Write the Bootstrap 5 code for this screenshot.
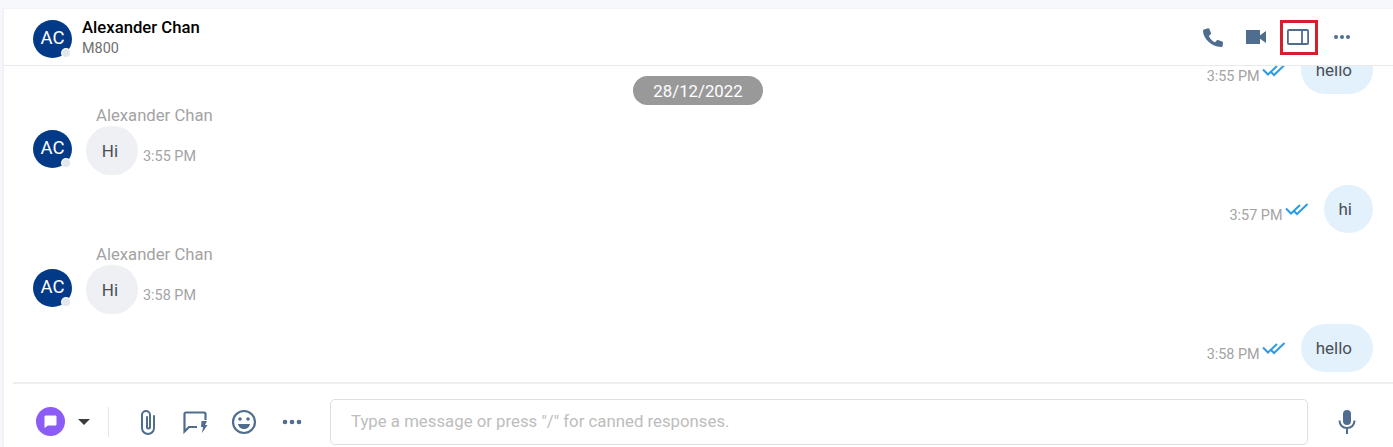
<!DOCTYPE html>
<html lang="en">
<head>
    <meta charset="UTF-8">
    <meta name="viewport" content="width=device-width, initial-scale=1.0">
    <title>Chat</title>
    <link href="https://cdn.jsdelivr.net/npm/bootstrap@5.3.0/dist/css/bootstrap.min.css" rel="stylesheet">
    <style>
        html, body { height: 447px; overflow: hidden; }
        body { background: #f7f8fc; font-family: Roboto, "Liberation Sans", sans-serif; padding: 9px 0 0 4px; }
        .chat-shell { background: #fff; height: 438px; box-shadow: -1px 0 3px rgba(0,0,0,.05); }
        .chat-head { height: 57px; padding: 0 32px 0 29px; border-bottom: 1px solid #e9e9ec; }
        .avatar-ac { width: 39px; height: 38px; background: #033a87; color: #fff; font-size: 18.5px; flex-shrink: 0; }
        .avatar-ac::after { content: ""; position: absolute; right: 2px; bottom: 1px; width: 8px; height: 8px; border-radius: 50%; background: #e3e6ea; box-shadow: 0 0 0 1px #fff; }
        .avatar-head { align-self: flex-start; margin-top: 11px; }
        .head-text { margin-left: 10px; padding-top: 3px; }
        .head-name { font-size: 16.7px; line-height: 20px; color: #000; font-weight: 500; }
        .head-sub { font-size: 14.4px; line-height: 21px; color: #6f6f6f; }
        .head-tools { gap: 5px; }
        .head-tool { width: 38px; height: 35px; display: flex; align-items: center; justify-content: center; }
        .head-tool.is-marked { outline: 3px solid #d2202c; outline-offset: -3px; }
        .msg-area { height: 316px; padding: 0 20px 10px 29px; justify-content: flex-end; overflow: hidden; flex-shrink: 0; }
        .date-pill { position: absolute; top: 10px; left: 629px; width: 130px; height: 29px; line-height: 30px; background: #999; color: #fff; font-size: 16.8px; border-radius: 15px; text-align: center; z-index: 1; }
        .sender-name { font-size: 16.7px; line-height: 20px; color: #a3a3a3; margin-left: 63px; padding-top: 1px; }
        .bubble-in, .bubble-out { display: flex; align-items: center; justify-content: center; font-size: 17px; line-height: 1; color: #4a4f55; flex-shrink: 0; padding-top: 1px; }
        .bubble-in { background: #eef0f3; width: 52px; height: 49px; border-radius: 25px; margin-left: 14px; padding-right: 4px; }
        .bubble-out { background: #e3f1fd; padding-left: 15px; padding-right: 21px; height: 48px; border-radius: 24px; margin-left: 15px; }
        .msg-time { font-size: 14.4px; color: #a3a3a3; line-height: 18px; }
        .time-out { margin-top: 14px; margin-right: 2px; }
        .time-in { margin-left: 5px; margin-top: 12px; }
        .avatar-in { margin-top: 4px; }
        .msg-in { margin-top: 11px; }
        .msg-out { margin-top: 10px; }
        .composer { flex: 1; margin-left: 9px; border-top: 2px solid #eeeeef; padding: 12px 36px 0 23px; }
        .type-dot { width: 29px; height: 29px; background: #8b5cf6; }
        .type-caret { width: 0; height: 0; border-left: 6px solid transparent; border-right: 6px solid transparent; border-top: 6px solid #3c3c3c; margin-left: 13px; margin-right: 18px; }
        .tool-sep { width: 1px; height: 30px; background: #e6e6e6; margin-right: 29px; }
        .tool-quick { margin-left: 24px; }
        .tool-smile { margin-left: 23px; }
        .tool-more { margin-left: 25px; }
        .composer-input { width: 978px; height: 46px; border: 1px solid #dcdfe3; border-radius: 5px; font-size: 16.8px; color: #bdbdbd; padding: 0 20px; line-height: 42px; margin-left: 28px; white-space: nowrap; }
    </style>
</head>
<body>
    <div class="chat-shell d-flex flex-column">
        <div class="chat-head d-flex align-items-center flex-shrink-0">
            <div class="avatar-ac avatar-head rounded-circle d-flex align-items-center justify-content-center position-relative">AC</div>
            <div class="head-text">
                <div class="head-name">Alexander Chan</div>
                <div class="head-sub">M800</div>
            </div>
            <div class="head-tools d-flex align-items-center ms-auto">
                <div class="head-tool">
                    <svg width="20" height="19" viewBox="0 0 20 19"><path fill="#4f6d8f" d="M5 .2 1 1.500C.2 1.800 0 2.500 0 3.200.8 11 8 18.300 18 19c.8 0 1.500-.6 1.700-1.300l.3-3c0-.6-.3-1-.8-1.200l-4.200-1.400c-.5-.2-1-.1-1.300.3l-1.700 1.900C9.200 13 7 10.800 5.900 8l1.800-1.700c.4-.3.500-.8.300-1.300L6.400 1C6.200.4 5.600 0 5 .2z"/></svg>
                </div>
                <div class="head-tool">
                    <svg width="20" height="14" viewBox="0 0 20 14"><path fill="#4f6d8f" d="M0 0h14v5.200L20 1v12l-6-4.200V14H0z"/></svg>
                </div>
                <div class="head-tool is-marked">
                    <svg width="24" height="18" viewBox="0 0 24 18"><rect x=".9" y="2" width="20.200" height="14" rx="1" fill="none" stroke="#4f6d8f" stroke-width="1.800"/><path d="M15 2v14" stroke="#4f6d8f" stroke-width="1.800"/></svg>
                </div>
                <div class="head-tool">
                    <svg width="18" height="6" viewBox="0 0 18 6"><g fill="#4f6d8f"><circle cx="3" cy="3" r="2"/><circle cx="9" cy="3" r="2"/><circle cx="15" cy="3" r="2"/></g></svg>
                </div>
            </div>
        </div>

        <div class="msg-area d-flex flex-column position-relative">
            <div class="date-pill">28/12/2022</div>

            <div class="d-flex justify-content-end align-items-center flex-shrink-0">
                <span class="msg-time time-out">3:55 PM</span>
                <svg width="24" height="14" viewBox="0 0 24 14" fill="none" stroke="#2d9be6" stroke-width="2"><path d="M1 6.500l5 5 9-8.500M9 9l3 3L22.500 2"/></svg>
                <div class="bubble-out">hello</div>
            </div>

            <div class="msg-in flex-shrink-0">
                <div class="sender-name">Alexander Chan</div>
                <div class="d-flex align-items-start">
                    <div class="avatar-ac avatar-in rounded-circle d-flex align-items-center justify-content-center position-relative">AC</div>
                    <div class="bubble-in">Hi</div>
                    <span class="msg-time time-in align-self-center">3:55 PM</span>
                </div>
            </div>

            <div class="msg-out d-flex justify-content-end align-items-center flex-shrink-0">
                <span class="msg-time time-out">3:57 PM</span>
                <svg width="24" height="14" viewBox="0 0 24 14" fill="none" stroke="#2d9be6" stroke-width="2"><path d="M1 6.500l5 5 9-8.500M9 9l3 3L22.500 2"/></svg>
                <div class="bubble-out">hi</div>
            </div>

            <div class="msg-in flex-shrink-0">
                <div class="sender-name">Alexander Chan</div>
                <div class="d-flex align-items-start">
                    <div class="avatar-ac avatar-in rounded-circle d-flex align-items-center justify-content-center position-relative">AC</div>
                    <div class="bubble-in">Hi</div>
                    <span class="msg-time time-in align-self-center">3:58 PM</span>
                </div>
            </div>

            <div class="msg-out d-flex justify-content-end align-items-center flex-shrink-0">
                <span class="msg-time time-out">3:58 PM</span>
                <svg width="24" height="14" viewBox="0 0 24 14" fill="none" stroke="#2d9be6" stroke-width="2"><path d="M1 6.500l5 5 9-8.500M9 9l3 3L22.500 2"/></svg>
                <div class="bubble-out">hello</div>
            </div>
        </div>

        <div class="composer d-flex align-items-center">
            <div class="type-dot rounded-circle d-flex align-items-center justify-content-center">
                <svg width="15" height="15" viewBox="0 0 15 15"><path fill="#fff" d="M3 1.500h9c1 0 1.500.5 1.500 1.500v7c0 1-.5 1.500-1.500 1.500H5l-3.500 2.500V3c0-1 .5-1.500 1.500-1.500z"/></svg>
            </div>
            <div class="type-caret"></div>
            <div class="tool-sep"></div>
            <svg width="20" height="26" viewBox="0 0 20 26" fill="none" stroke="#4f6d8f" stroke-width="2" stroke-linecap="round"><path d="M16 7v12a6 6 0 0 1-12 0V6a4 4 0 0 1 8 0v12a1.500 1.500 0 0 1-3 0V8"/></svg>
            <svg class="tool-quick" width="26" height="24" viewBox="0 0 26 24" fill="none"><path stroke="#4f6d8f" stroke-width="2.200" d="M15 17H7l-4.500 4.500V4c0-1 .5-1.500 1.500-1.500h18c1 0 1.500.5 1.500 1.500v6"/><path fill="#4f6d8f" d="M19.500 11H25l-2 4h2.500L20 23l1-6h-2z"/></svg>
            <svg class="tool-smile" width="26" height="26" viewBox="0 0 26 26"><circle cx="13" cy="13" r="11" fill="none" stroke="#4f6d8f" stroke-width="2.200"/><circle cx="9" cy="10" r="1.800" fill="#4f6d8f"/><circle cx="17" cy="10" r="1.800" fill="#4f6d8f"/><path fill="#4f6d8f" d="M7 15h12c-.5 3-3 5-6 5s-5.500-2-6-5z"/></svg>
            <svg class="tool-more" width="20" height="6" viewBox="0 0 20 6"><g fill="#4f6d8f"><circle cx="3" cy="3" r="2.300"/><circle cx="10" cy="3" r="2.300"/><circle cx="17" cy="3" r="2.300"/></g></svg>
            <div class="composer-input">Type a message or press "/" for canned responses.</div>
            <svg class="ms-auto" width="20" height="26" viewBox="0 0 20 26"><rect x="6" y="1" width="8" height="15" rx="4" fill="#4f6d8f"/><path d="M2.500 11.500c0 4.500 3.200 7.500 7.500 7.500s7.500-3 7.500-7.500M10 19v6" fill="none" stroke="#4f6d8f" stroke-width="2"/></svg>
        </div>
    </div>
</body>
</html>
